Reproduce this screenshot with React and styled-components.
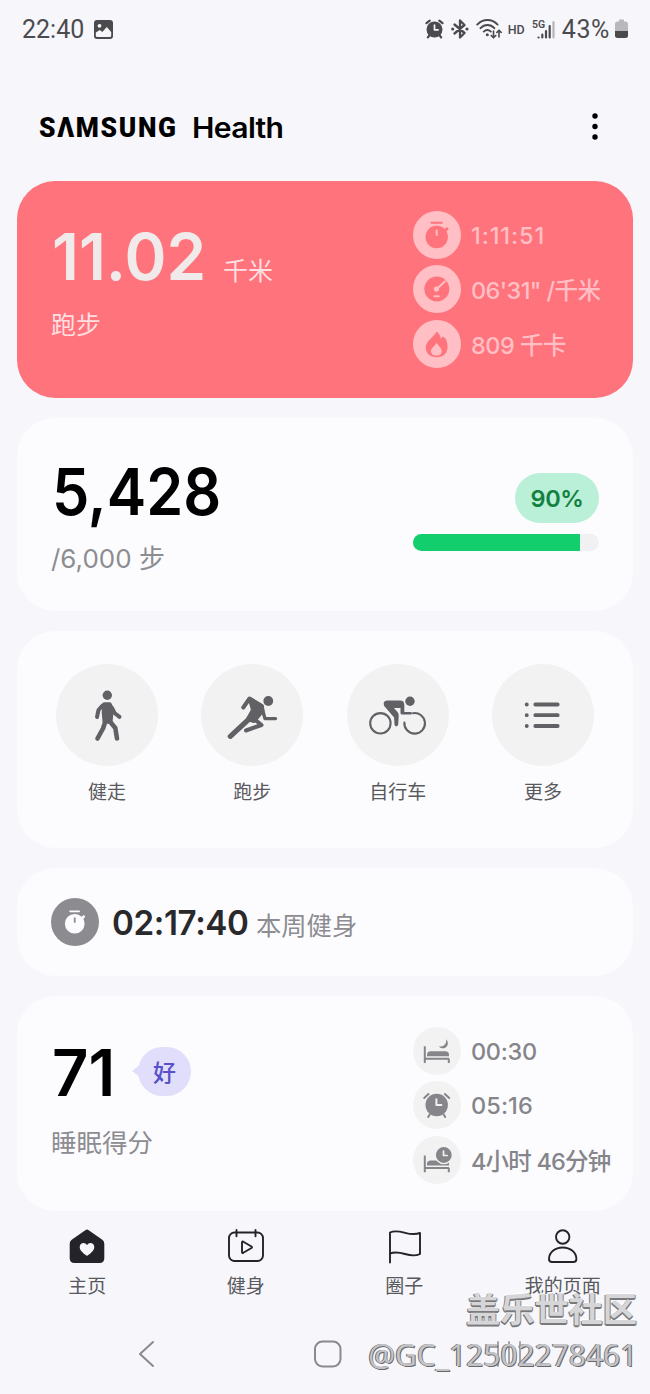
import styled, { createGlobalStyle } from 'styled-components';

const GlobalStyle = createGlobalStyle`
  * {
    box-sizing: border-box;
  }

  body {
    margin: 0;
    background: #f6f6fb;
    font-family: Inter, 'Noto Sans CJK SC', sans-serif;
  }
`;

const Screen = styled.div`
  position: relative;
  width: 650px;
  height: 1394px;
  overflow: hidden;
  display: flex;
  flex-direction: column;
  background: #f6f6fb;
`;

const StatusBar = styled.div`
  display: flex;
  align-items: center;
  justify-content: space-between;
  height: 58px;
  padding: 0 22px 0 22px;
  font-family: Roboto, sans-serif;
  font-size: 25px;
  color: #4b4b4e;
`;

const StatusGroup = styled.div`
  display: flex;
  align-items: center;
  gap: ${({ $gap }) => $gap}px;
`;

const BatteryLevel = styled.span`
  margin-right: -2px;
  letter-spacing: 0.6px;
`;

const Header = styled.header`
  display: flex;
  align-items: center;
  justify-content: space-between;
  height: 123px;
  padding: 15px 50px 0 39px;
  color: #000;
`;

const Brand = styled.h1`
  display: flex;
  align-items: center;
  margin: 1px 0 0;
  line-height: 32px;
`;

const BrandName = styled.span`
  width: 153px;
  font-family: Roboto, sans-serif;
  font-weight: 900;
  font-size: 28px;
  letter-spacing: 1.8px;
  transform: scaleX(0.94);
  transform-origin: left;
`;

const BrandProduct = styled.span`
  font-weight: 600;
  font-size: 28px;
  letter-spacing: -0.6px;
  transform: scaleX(1.075);
  transform-origin: left;
`;

const Cards = styled.main`
  display: flex;
  flex-direction: column;
  gap: 20px;
  padding: 0 17px;
`;

const Card = styled.section`
  display: flex;
  justify-content: space-between;
  height: ${({ $height }) => $height}px;
  padding: 0 34px 0 35px;
  border-radius: 38px;
  background: ${({ $color }) => $color || '#fcfcff'};
`;

const Summary = styled.div`
  display: flex;
  flex-direction: column;
  padding-top: ${({ $top }) => $top}px;
`;

const ValueRow = styled.div`
  display: flex;
  align-items: baseline;
  height: 64px;
`;

const BigValue = styled.span`
  width: ${({ $width }) => $width}px;
  font-size: 65px;
  font-weight: 600;
  line-height: 64px;
  white-space: nowrap;
  color: ${({ $color }) => $color || '#000'};
  transform: scaleX(${({ $stretch }) => $stretch || 1});
  transform-origin: left;
`;

const Unit = styled.span`
  font-size: 25px;
  font-weight: 400;
  color: #ffdfe0;
`;

const Caption = styled.div`
  margin-top: ${({ $top }) => $top}px;
  font-size: ${({ $size }) => $size || 25.5}px;
  line-height: 32px;
  margin-left: -1px;
  color: ${({ $color }) => $color || '#8c8c91'};
`;

const Stats = styled.ul`
  display: flex;
  flex-direction: column;
  gap: 6.3px;
  width: 186px;
  margin: 0;
  padding: ${({ $top }) => $top}px 0 0;
  list-style: none;
`;

const Stat = styled.li`
  display: flex;
  align-items: center;
  gap: 10px;
  height: 48px;
  font-size: 23.5px;
  font-weight: 500;
  white-space: nowrap;
  color: ${({ $color }) => $color};
`;

const StatText = styled.span`
  letter-spacing: ${({ $spacing }) => $spacing}px;
`;

const Round = styled.span`
  display: flex;
  flex: none;
  width: ${({ $size }) => $size}px;
  height: ${({ $size }) => $size}px;
  border-radius: 50%;
  background: ${({ $bg }) => $bg};
`;

const Goal = styled.div`
  display: flex;
  flex-direction: column;
  align-items: flex-end;
  gap: 11px;
  padding-top: 55px;
`;

const Percent = styled.div`
  width: 84px;
  height: 50px;
  border-radius: 25px;
  background: #baefd8;
  color: #12813f;
  font-size: 23.5px;
  font-weight: 600;
  letter-spacing: -0.4px;
  line-height: 51px;
  text-align: center;
`;

const Track = styled.div`
  width: 186px;
  height: 17px;
  border-radius: 9px;
  overflow: hidden;
  background: #f1f1f3;
`;

const Fill = styled.div`
  height: 100%;
  background: #12ce6c;
`;

const Activities = styled.div`
  display: flex;
  justify-content: space-between;
  width: 538px;
  margin-left: 4px;
  padding-top: 33px;
`;

const Activity = styled.div`
  display: flex;
  flex-direction: column;
  align-items: center;
  gap: 13px;
  width: 102px;
  font-size: 19px;
  line-height: 28px;
  color: #59595d;
`;

const WeekRow = styled.div`
  display: flex;
  align-items: center;
  margin-left: -1px;
`;

const WeekTime = styled.span`
  width: 144px;
  margin-left: 13px;
  font-size: 34px;
  font-weight: 600;
  white-space: nowrap;
  color: #29292b;
  letter-spacing: -0.4px;
  transform: scaleX(0.975);
  transform-origin: left;
`;

const WeekLabel = styled.span`
  padding-top: 4px;
  font-size: 25.3px;
  color: #8c8c91;
`;

const Bubble = styled.span`
  position: relative;
  align-self: flex-start;
  width: 53px;
  height: 49px;
  margin-top: 6px;
  border-radius: 25px;
  background: #e0defb;
  color: #5850c9;
  font-size: 23px;
  font-weight: 500;
  line-height: 53px;
  text-align: center;

  &::before {
    content: '';
    position: absolute;
    left: -6px;
    top: 17px;
    border: 7px solid transparent;
    border-left: 0;
    border-right: 9px solid #e0defb;
  }
`;

const TabBar = styled.nav`
  display: flex;
  height: 99px;
  padding: 17px 8px 0;
`;

const Tab = styled.div`
  flex: 1;
  display: flex;
  flex-direction: column;
  align-items: center;
  gap: 9px;
  font-size: 19px;
  line-height: 28px;
  color: #59595d;
`;

const SystemNav = styled.div`
  display: flex;
  gap: 158px;
  padding: 30px 0 0 138px;

  svg:last-child {
    margin-left: -4px;
  }
`;

const Watermark = styled.div`
  position: absolute;
  right: 13px;
  bottom: 18px;
  display: flex;
  flex-direction: column;
  align-items: flex-end;
  white-space: nowrap;
`;

const Community = styled.span`
  font-family: 'Noto Sans CJK SC', sans-serif;
  font-size: 34.2px;
  font-weight: 700;
  line-height: 44px;
  margin-bottom: 3px;
  color: #d6d6d8;
  text-shadow: -1px 1px 0 #7c7c7e, 0 2px 0 #77777a, 1px 1px 0 #8a8a8c, -1px -1px 0 #fff;
`;

const Handle = styled.span`
  font-family: 'Noto Sans', sans-serif;
  font-size: 31.5px;
  line-height: 44px;
  color: #c4c4c7;
  transform: scaleX(0.95);
  transform-origin: right;
  text-shadow: 1px 1px 0 #68686c, -1px 0 0 #6c6c70;
`;

const Svg = ({ w, h = w, children, ...rest }) => (
  <svg width={w} height={h} viewBox={`0 0 ${w} ${h}`} fill="none" strokeLinecap="round" strokeLinejoin="round" {...rest}>
    {children}
  </svg>
);

const AlarmSmall = () => (
  <Svg w={19} h={20} stroke="#4b4b4e" strokeWidth="2.2">
    <circle cx="9.5" cy="10.5" r="8" fill="#4b4b4e" stroke="none" />
    <path d="M1.5 4.2 4.7 1.6M17.5 4.2 14.3 1.6M4.3 16.5 2.9 18.4M14.7 16.5l1.4 1.9" />
    <path d="M9.5 6v4.8h3.6" stroke="#f6f6fb" strokeWidth="1.7" />
  </Svg>
);

const Bluetooth = () => (
  <Svg w={18} h={20} stroke="#4b4b4e" strokeWidth="2.3">
    <path d="M3.5 5.5 13.5 14 9 18.500v-17l4.500 4.500-10 8.500" />
    <circle cx="1.7" cy="10" r="1.6" fill="#4b4b4e" stroke="none" />
    <circle cx="16" cy="10" r="1.6" fill="#4b4b4e" stroke="none" />
  </Svg>
);

const Wifi = () => (
  <Svg w={27} h={20} stroke="#4b4b4e" strokeWidth="1.9">
    <path d="M1.2 5.600C7-.5 16-.5 21.600 5.600M4.500 9.200C8.500 5 14.500 5 18.300 9.200M7.800 12.600c2-2.200 5-2.200 7 0" />
    <circle cx="11.3" cy="15.8" r="1.5" fill="#4b4b4e" stroke="none" />
    <path d="M17.500 12v6.500M15.200 16.500l2.300 2.300 2.300-2.300M23 18v-6.500M20.800 13.500 23 11.200l2.300 2.300" strokeWidth="1.6" />
  </Svg>
);

const Hd = styled.span`
  margin-left: -2px;
  font-size: 12.5px;
  font-weight: 500;
`;

const Signal = () => (
  <Svg w={23} h={20} stroke="#4b4b4e" strokeWidth="2.2">
    <text x="0" y="8.5" fontFamily="Roboto, sans-serif" fontSize="10.5" fontWeight="600" fill="#4b4b4e" stroke="none">
      5G
    </text>
    <path d="M6.500 18.500h.1M10.300 18.500v-3M14 18.500v-6.500M17.700 18.500V7" />
    <path d="M21.500 18.500V3" stroke="#b5b5ba" />
  </Svg>
);

const Battery = () => (
  <Svg w={13} h={20}>
    <path d="M4 .5h5v2h1.500a2.500 2.500 0 0 1 2.500 2.500v7H0V5a2.500 2.500 0 0 1 2.500-2.500H4z" fill="#b9b9bd" />
    <path d="M0 12h13v4.500a2.500 2.500 0 0 1-2.500 2.500h-8A2.500 2.500 0 0 1 0 16.500z" fill="#4b4b4e" />
  </Svg>
);

const Picture = () => (
  <Svg w={19}>
    <rect width="19" height="19" rx="3" fill="#4b4b4e" />
    <circle cx="5.5" cy="5.8" r="1.9" fill="#f6f6fb" />
    <path d="M1.800 15.500v-3l4-2.500 2.500 2 4.500-5 4.400 5v3.500q0 1.500-1.500 1.500H3.300q-1.500 0-1.500-1.500z" fill="#f6f6fb" />
  </Svg>
);

const Stopwatch = ({ color, bg, scale = 1 }) => (
  <Svg w={48} stroke={color} strokeWidth="2">
    <g transform={`translate(24 24) scale(${scale}) translate(-24 -24)`}>
      <circle cx="23.7" cy="26" r="11.2" fill={color} stroke="none" />
      <path d="M18.500 11.800h10.200" />
      <path d="m31.200 18.800 3-2.300 1 1.800-2.500 2.200z" fill={color} strokeWidth="1" />
      <path d="M23.700 19.500V24" stroke={bg} />
    </g>
  </Svg>
);

const Pace = ({ color, bg }) => (
  <Svg w={48} stroke={bg} strokeWidth="2">
    <circle cx="23.8" cy="24" r="12.5" fill={color} stroke="none" />
    <path d="m23.800 24 8-7.500M21.500 31.300h4.300" />
    <circle cx="23.4" cy="24" r="1.6" fill={bg} />
  </Svg>
);

const Flame = ({ color, bg }) => (
  <Svg w={48}>
    <path
      d="M23.700 11.500c-2.500 5.500-11 9-11 16.300 0 5.500 4.800 9.500 10.900 9.500S34.500 33.500 34.500 27.500c0-3.500-.2-8.500-4.600-11l-2.200 2.200c-.2-3-1.800-5.400-4-7.200z"
      fill={color}
    />
    <path d="M23.700 22.800c-1.200 3-5.700 4.800-5.700 8.600 0 2.400 2.400 4.200 5.400 4.200s5.300-1.800 5.300-4.200c0-3.800-3.800-5.600-5-8.600z" fill={bg} />
  </Svg>
);

const Bed = ({ color, top = 0 }) => (
  <g transform={`translate(-.5 ${top})`}>
    <path d="M12.300 19.300V36M12.300 31.700h24.300M36.300 31.700V36" stroke={color} strokeWidth="2" strokeLinecap="butt" />
    <path d="M14.500 29.300v-1.500q0-3.500 3.700-3.500h14.600q3.700 0 3.700 3.500v1.500z" fill={color} />
  </g>
);

const BedMoon = ({ color }) => (
  <Svg w={48}>
    <Bed color={color} />
    <path d="M33 12.300a5.800 5.800 0 0 1-7.300 7 5.100 5.100 0 1 0 7.300-7z" fill={color} />
  </Svg>
);

const BedClock = ({ color, bg }) => (
  <Svg w={48}>
    <Bed color={color} top={0.3} />
    <circle cx="30.8" cy="19" r="8.6" fill={color} stroke={bg} strokeWidth="1.4" />
    <path d="M30.500 15v4.500h3.600" stroke={bg} strokeWidth="1.7" />
  </Svg>
);

const Alarm = ({ color, bg }) => (
  <Svg w={48} stroke={color} strokeWidth="2">
    <circle cx="23.7" cy="24" r="11.2" fill={color} stroke="none" />
    <path d="m11.200 17 4.300-4M36.200 17l-4.300-4M16.700 33.500 15.200 36M30.700 33.500l1.500 2.500" />
    <path d="M23.400 18.200V24h5" stroke={bg} />
  </Svg>
);

const Walk = () => (
  <Svg w={102} fill="#616165" stroke="#616165" strokeWidth="4.6">
    <circle cx="51.3" cy="31.3" r="4.7" stroke="none" />
    <path d="M46.500 41.500 42.500 46 41 53M56 44 58.500 49l5 3.800" fill="none" strokeWidth="4" />
    <path d="M48.500 40.500h5l2 4-1.200 13h-5.500l-.8-9z" />
    <path d="M49.500 57 47 64.500 41.500 74.500M53.500 57l5.800 7L61 74.500" fill="none" />
  </Svg>
);

const Run = () => (
  <Svg w={102} stroke="#616165" strokeWidth="4">
    <circle cx="67.3" cy="37" r="4.9" fill="#616165" stroke="none" />
    <path d="m42.300 43.500 6.200-9 12 7.300" />
    <path d="M49 35.500 61 42.500l.5 4.500-8.500 10-6-2 5-9z" fill="#616165" />
    <path d="m61 44 3 10.600h10.500" strokeWidth="3.4" />
    <path d="M53 50.500 29.300 72.300" strokeWidth="5.2" />
    <path d="m52 54 8.500 7-15.500 5.500" />
  </Svg>
);

const Bike = () => (
  <Svg w={102} stroke="#616165" strokeWidth="2.1">
    <circle cx="33.4" cy="59.3" r="10.2" />
    <path d="M57.400 58.500A10.300 10.300 0 1 0 66 49.200" />
    <circle cx="63" cy="37.2" r="4.7" fill="#616165" stroke="none" />
    <path
      d="M40 36.500h13q4.300 0 4.300 4.300v7.200h6.200q1.500 0 1.500 1.300t-1.500 1.300h-8.500q-1.500 0-1.500-1.500v-5h-6.500l3.500 4q1.500 2 1.200 4l-.5 8.500q-.2 1.800-1.900 1.800t-1.800-1.800l-.4-7-9.900-11.600Q35.300 37 40 36.500z"
      fill="#616165"
      stroke="none"
    />
  </Svg>
);

const More = () => (
  <Svg w={102} stroke="#616165" strokeWidth="3.8">
    {[40.5, 51.2, 62].map((y) => (
      <path key={y} d={`M34.700 ${y}h.1M43.300 ${y}h22.400`} />
    ))}
  </Svg>
);

const HomeIcon = () => (
  <Svg w={36}>
    <path
      d="M16.300 2.300q1.700-1.500 3.400 0l13.300 9.200q2.300 1.600 2.300 4.300v14.400q0 4.800-4.800 4.800h-25Q.7 35 .7 30.200V15.800q0-2.700 2.300-4.300z"
      fill="#232329"
    />
    <path d="M18 28c-3-2.300-7.300-5.200-7.300-9 0-4.500 5.500-5.500 7.300-1.800 1.800-3.700 7.300-2.700 7.300 1.800 0 3.800-4.300 6.700-7.300 9z" fill="#f6f6fb" />
  </Svg>
);

const FitnessIcon = () => (
  <Svg w={36} stroke="#232329" strokeWidth="1.9">
    <rect x="1" y="4.5" width="34" height="28.5" rx="5.5" />
    <path d="M8.500 2v6.300M27.500 2v6.300M14 14.500V24q0 1.500 1.300.8l8.200-4.800q1-.8 0-1.500l-8.200-4.800q-1.300-.6-1.300.8z" />
  </Svg>
);

const FlagIcon = () => (
  <Svg w={36} stroke="#232329" strokeWidth="1.9">
    <path d="M4 34.500V4.500c5-2.500 10-1 15 .3s10 2 15 .2v21c-5 2.500-10 1.500-15 0s-10-2.500-15-.5" />
  </Svg>
);

const PersonIcon = () => (
  <Svg w={36} stroke="#232329" strokeWidth="1.9">
    <circle cx="17.7" cy="9" r="6.7" />
    <path d="M4 31c0-6.500 6-11.500 13.700-11.500S31.400 24.500 31.400 31q0 3-3 3H7q-3 0-3-3z" />
  </Svg>
);

const PINK = '#ffbfc5';
const RED = '#ff737c';
const GREY = '#85858a';
const PALE = '#f2f2f3';

const runStats = [
  { icon: Stopwatch, text: '1:11:51', spacing: 0.9 },
  { icon: Pace, text: '06\'31" /千米', spacing: -0.6 },
  { icon: Flame, text: '809 千卡', spacing: -0.5 },
];

const sleepStats = [
  { icon: BedMoon, text: '00:30', spacing: -0.3 },
  { icon: Alarm, text: '05:16', spacing: 0.1 },
  { icon: BedClock, text: '4小时 46分钟', spacing: -0.8 },
];

const activities = [
  { icon: Walk, label: '健走' },
  { icon: Run, label: '跑步' },
  { icon: Bike, label: '自行车' },
  { icon: More, label: '更多' },
];

const tabs = [
  { icon: HomeIcon, label: '主页' },
  { icon: FitnessIcon, label: '健身' },
  { icon: FlagIcon, label: '圈子' },
  { icon: PersonIcon, label: '我的页面' },
];

const StatList = ({ items, top, textColor, color, bg }) => (
  <Stats $top={top}>
    {items.map(({ icon: Icon, text, spacing }) => (
      <Stat key={text} $color={textColor}>
        <Round $size={48} $bg={bg}>
          <Icon color={color} bg={bg} />
        </Round>
        <StatText $spacing={spacing}>{text}</StatText>
      </Stat>
    ))}
  </Stats>
);

const App = () => {
  const percent = 90;

  return (
    <Screen>
      <GlobalStyle />
      <StatusBar>
        <StatusGroup $gap={10}>
          <span>22:40</span>
          <Picture />
        </StatusGroup>
        <StatusGroup $gap={7}>
          <AlarmSmall />
          <Bluetooth />
          <Wifi />
          <Hd>HD</Hd>
          <Signal />
          <BatteryLevel>43%</BatteryLevel>
          <Battery />
        </StatusGroup>
      </StatusBar>

      <Header>
        <Brand>
          <BrandName>SΛMSUNG</BrandName>
          <BrandProduct>Health</BrandProduct>
        </Brand>
        <Svg w={10} h={30} fill="#000">
          <circle cx="5" cy="4" r="2.7" />
          <circle cx="5" cy="14.5" r="2.7" />
          <circle cx="5" cy="25" r="2.7" />
        </Svg>
      </Header>

      <Cards>
        <Card $height={217} $color={RED}>
          <Summary $top={44}>
            <ValueRow>
              <BigValue $width={171} $stretch={0.98} $color="#f0eaea">11.02</BigValue>
              <Unit>千米</Unit>
            </ValueRow>
            <Caption $top={20} $size={25} $color="#ffdfe0">跑步</Caption>
          </Summary>
          <StatList items={runStats} top={30} textColor={PINK} color={RED} bg={PINK} />
        </Card>

        <Card $height={193}>
          <Summary $top={42}>
            <ValueRow>
              <BigValue $width={180} $stretch={0.913}>5,428</BigValue>
            </ValueRow>
            <Caption $top={19} $size={26}>/6,000 步</Caption>
          </Summary>
          <Goal>
            <Percent>{percent}%</Percent>
            <Track>
              <Fill style={{ width: `${percent}%` }} />
            </Track>
          </Goal>
        </Card>

        <Card $height={217}>
          <Activities>
            {activities.map(({ icon: Icon, label }) => (
              <Activity key={label}>
                <Round $size={102} $bg={PALE}>
                  <Icon />
                </Round>
                {label}
              </Activity>
            ))}
          </Activities>
        </Card>

        <Card $height={108}>
          <WeekRow>
            <Round $size={48} $bg="#8c8c90">
              <Stopwatch color="#fcfcff" bg="#8c8c90" scale={0.88} />
            </Round>
            <WeekTime>02:17:40</WeekTime>
            <WeekLabel>本周健身</WeekLabel>
          </WeekRow>
        </Card>

        <Card $height={215}>
          <Summary $top={45}>
            <ValueRow>
              <BigValue $width={86} $stretch={0.975}>71</BigValue>
              <Bubble>好</Bubble>
            </ValueRow>
            <Caption $top={22}>睡眠得分</Caption>
          </Summary>
          <StatList items={sleepStats} top={31} textColor={GREY} color={GREY} bg={PALE} />
        </Card>
      </Cards>

      <TabBar>
        {tabs.map(({ icon: Icon, label }) => (
          <Tab key={label}>
            <Icon />
            {label}
          </Tab>
        ))}
      </TabBar>

      <SystemNav>
        <Svg w={18} h={28} stroke="#8a8a8e" strokeWidth="2">
          <path d="M15 2 2 14 15 26" />
        </Svg>
        <Svg w={28} stroke="#8a8a8e" strokeWidth="2">
          <rect x="1" y="1.5" width="25.5" height="25" rx="7.5" />
        </Svg>
        <Svg w={28} stroke="#a5a5a9" strokeWidth="2">
          <path d="M2 2v24M13 2v24M24 2v24" />
        </Svg>
      </SystemNav>

      <Watermark>
        <Community>盖乐世社区</Community>
        <Handle>@GC_12502278461</Handle>
      </Watermark>
    </Screen>
  );
};

export default App;
